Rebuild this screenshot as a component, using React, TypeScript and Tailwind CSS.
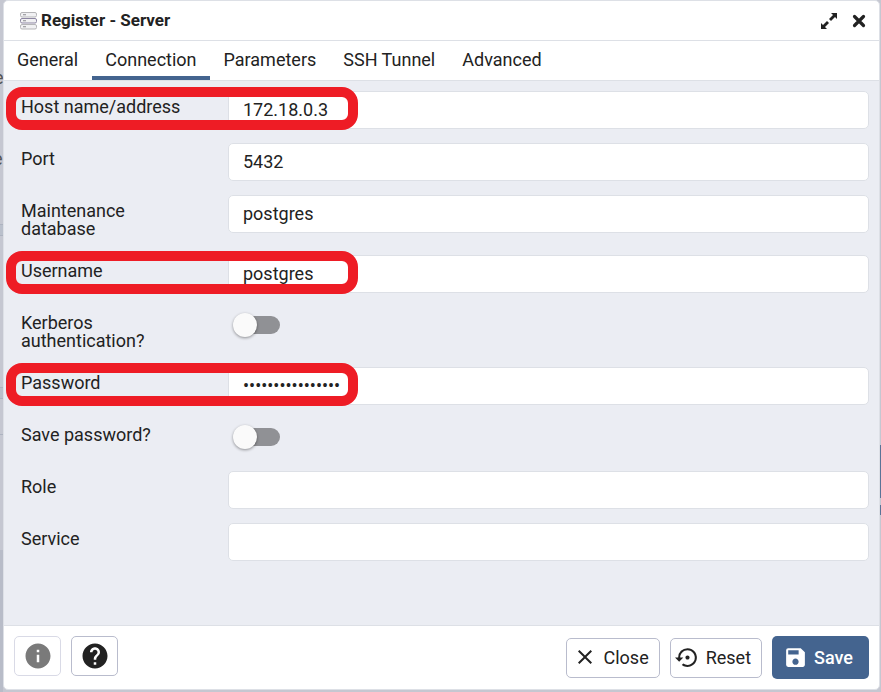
import { useState } from "react";
import type { ReactNode } from "react";
import { MdClose, MdHelp, MdInfo, MdSave, MdSettingsBackupRestore } from "react-icons/md";

const tabs = ["General", "Connection", "Parameters", "SSH Tunnel", "Advanced"];

function ServerIcon() {
  return (
    <svg className="h-[18px] w-[17px] shrink-0" viewBox="0 0 17 18" fill="#f1f1f3" strokeWidth="1" aria-hidden="true">
      <rect x="0.5" y="0.5" width="16" height="4.5" rx="1.5" stroke="#b5b5b8" />
      <rect x="0.5" y="6.5" width="16" height="4.5" rx="1.5" stroke="#8d86a3" />
      <rect x="0.5" y="12.5" width="16" height="4.5" rx="1.5" stroke="#b5b5b8" />
      <path d="M3 2.75h3M3 8.75h3M3 14.75h3" stroke="#8a8a8f" />
    </svg>
  );
}

function ExpandIcon() {
  return (
    <svg className="size-4" viewBox="0 0 16 16" fill="#222" aria-hidden="true">
      <path d="M10 0h6v6l-2-2-4 4-2-2 4-4z" />
      <path d="M6 16H0v-6l2 2 4-4 2 2-4 4z" />
    </svg>
  );
}

function HeavyCloseIcon() {
  return (
    <svg className="size-[14px]" viewBox="0 0 14 14" aria-hidden="true">
      <path d="M2.500 2.500l9 9M11.500 2.500l-9 9" stroke="#222" strokeWidth="3.200" strokeLinecap="round" />
    </svg>
  );
}

function Row({ id, label, tall, marked, children }: { id: string; label: string; tall?: boolean; marked?: boolean; children: ReactNode }) {
  return (
    <div className={`relative flex items-start ${tall ? "min-h-[46px]" : "min-h-[38px]"}`}>
      <label htmlFor={id} className="w-[207px] shrink-0 pt-[7px] pr-10 leading-[18px]">
        {label}
      </label>
      {children}
      {marked && (
        <div className="pointer-events-none absolute -top-1 -left-[15px] h-[43px] w-[352px] rounded-[16px] border-10 border-[#ee1c25]" />
      )}
    </div>
  );
}

function TextField({ id, type = "text", value = "" }: { id: string; type?: string; value?: string }) {
  return (
    <input
      id={id}
      type={type}
      defaultValue={value}
      className="h-[38px] min-w-0 flex-1 rounded-[5px] border border-[#dde0e6] bg-white px-[14px] pb-[2px] outline-none"
    />
  );
}

function Toggle({ id }: { id: string }) {
  return (
    <span className="relative ml-2 mt-[9px] flex h-[18px] w-11">
      <input id={id} type="checkbox" role="switch" className="peer h-[18px] w-11 appearance-none rounded-full bg-[#909195] checked:bg-[#326690]" />
      <span className="pointer-events-none absolute -top-[3px] -left-[3px] size-6 rounded-full bg-[#fafafa] shadow-[0_1px_3px_rgba(0,0,0,0.4)] peer-checked:translate-x-6" />
    </span>
  );
}

export default function App() {
  const [active, setActive] = useState("Connection");
  return (
    <div className="relative flex min-h-screen flex-col overflow-hidden bg-[#c5c7d1] pr-px pb-[2px] pl-[3px] font-[Roboto,sans-serif] text-[18px] text-[#222]">
      <div className="absolute inset-y-0 left-0 w-[3px] overflow-hidden text-[#555]" aria-hidden="true">
        <span className="absolute top-[64px] -left-[6px]">e</span>
        <span className="absolute top-[145px] -left-[7px]">e</span>
        <div className="absolute top-[224px] h-3 w-full border-y border-[#adb3c0] bg-[#bac0cc]" />
        <div className="absolute top-[387px] h-3 w-full border-y border-[#adb3c0] bg-[#bac0cc]" />
        <div className="absolute top-[434px] h-px w-full bg-[#adb3c0]" />
        <div className="absolute top-[550px] bottom-0 w-full bg-[#b8bcc8]" />
      </div>
      <div className="absolute top-[445px] right-0 h-[53px] w-px bg-[#5a7397]" />
      <div className="absolute top-[505px] right-0 h-[10px] w-px bg-[#5a7397]" />

      <section role="dialog" aria-label="Register - Server" className="relative flex flex-1 flex-col overflow-hidden rounded-[5px] border border-[#dde0e6] bg-white">
        <header className="flex h-10 shrink-0 items-center border-b border-[#dde0e6] pr-[13px] pl-4">
          <ServerIcon />
          <h1 className="ml-1 flex-1 text-[17px] font-bold">Register - Server</h1>
          <button type="button" aria-label="Maximize" className="mr-[15px]">
            <ExpandIcon />
          </button>
          <button type="button" aria-label="Close dialog">
            <HeavyCloseIcon />
          </button>
        </header>

        <div role="tablist" className="flex h-10 shrink-0 gap-px border-b border-[#dde0e6]">
          {tabs.map((tab) => (
            <button
              key={tab}
              type="button"
              role="tab"
              aria-selected={tab === active}
              onClick={() => setActive(tab)}
              className={`border-b-4 px-[13px] pt-[2px] ${tab === active ? "border-[#44648f]" : "border-transparent"}`}
            >
              {tab}
            </button>
          ))}
        </div>

        <form className="flex flex-1 flex-col gap-[14px] bg-[#ebedf3] pt-[10px] pr-[10px] pb-10 pl-[17px]">
          <Row id="host" label="Host name/address" marked>
            <TextField id="host" value="172.18.0.3" />
          </Row>
          <Row id="port" label="Port">
            <TextField id="port" value="5432" />
          </Row>
          <Row id="db" label="Maintenance database" tall>
            <TextField id="db" value="postgres" />
          </Row>
          <Row id="user" label="Username" marked>
            <TextField id="user" value="postgres" />
          </Row>
          <Row id="kerberos" label="Kerberos authentication?" tall>
            <Toggle id="kerberos" />
          </Row>
          <Row id="password" label="Password" marked>
            <TextField id="password" type="password" value="postgres12345678" />
          </Row>
          <Row id="save-password" label="Save password?">
            <Toggle id="save-password" />
          </Row>
          <Row id="role" label="Role">
            <TextField id="role" />
          </Row>
          <Row id="service" label="Service">
            <TextField id="service" />
          </Row>
        </form>

        <footer className="flex h-16 shrink-0 items-center gap-[10px] border-t border-[#dde0e6] px-[10px]">
          <div className="mr-auto flex gap-[10px] pb-1">
            <button type="button" aria-label="Info" disabled className="flex h-10 w-[47px] items-center justify-center rounded-[5px] border border-[#d9dae6] text-[#7a7a7a]">
              <MdInfo size={30} />
            </button>
            <button type="button" aria-label="Help" className="flex h-10 w-[47px] items-center justify-center rounded-[5px] border border-[#b9bccd]">
              <MdHelp size={30} />
            </button>
          </div>
          <button type="button" className="flex h-10 items-center gap-1.5 rounded-[5px] border border-[#b9bccd] pr-[10px] pl-[6px] pb-px">
            <MdClose size={24} />
            Close
          </button>
          <button type="button" className="flex h-10 items-center gap-1.5 rounded-[5px] border border-[#b9bccd] pr-[10px] pl-1 pb-px">
            <MdSettingsBackupRestore size={25} />
            Reset
          </button>
          <button type="button" className="flex h-[43px] items-center gap-1.5 rounded-[5px] bg-[#44648f] pr-4 pl-[11px] pb-px font-medium text-white">
            <MdSave size={25} />
            Save
          </button>
        </footer>
      </section>
    </div>
  );
}
